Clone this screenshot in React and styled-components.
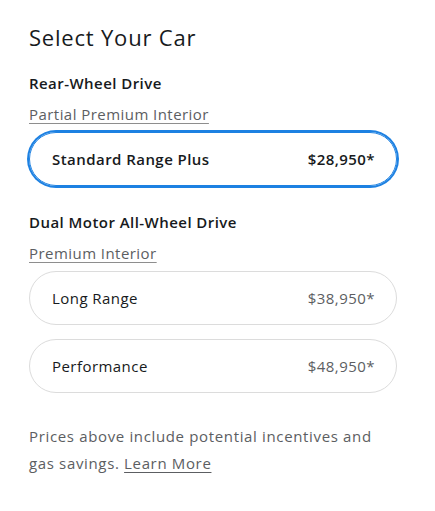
import React from 'react';
import styled, { createGlobalStyle } from 'styled-components';

const GlobalStyle = createGlobalStyle`
  body {
    margin: 0;
    background: #fff;
    font-family: "Open Sans", "Liberation Sans", sans-serif;
    color: #171a20;
    letter-spacing: 0.45px;
  }
`;

const groups = [
  {
    drive: 'Rear-Wheel Drive',
    interior: 'Partial Premium Interior',
    cars: [{ id: 'sr', name: 'Standard Range Plus', price: '$28,950*' }],
  },
  {
    drive: 'Dual Motor All-Wheel Drive',
    interior: 'Premium Interior',
    cars: [
      { id: 'lr', name: 'Long Range', price: '$38,950*' },
      { id: 'p', name: 'Performance', price: '$48,950*' },
    ],
  },
];

const App = () => {
  const selected = 'sr';
  return (
    <Page>
      <GlobalStyle />
      <Title>Select Your Car</Title>
      {groups.map((g) => (
        <Group key={g.drive}>
          <Drive>{g.drive}</Drive>
          <Interior>{g.interior}</Interior>
          <Options>
            {g.cars.map((c) => (
              <Option key={c.id} $active={c.id === selected}>
                <span>{c.name}</span>
                <Price $active={c.id === selected}>{c.price}</Price>
              </Option>
            ))}
          </Options>
        </Group>
      ))}
      <Note>
        Prices above include potential incentives and gas savings.{' '}
        <NoteLink>Learn More</NoteLink>
      </Note>
    </Page>
  );
};

const Page = styled.div`
  width: 368px;
  padding: 22px 0 0 29px;
`;

const Title = styled.h1`
  margin: 0;
  font-size: 22px;
  line-height: 30px;
  font-weight: 400;
  letter-spacing: 0.8px;
`;

const Group = styled.section`
  margin-top: 19px;
  & + & {
    margin-top: 24px;
  }
`;

const Drive = styled.h3`
  margin: 0;
  font-size: 15px;
  line-height: 24px;
  font-weight: 600;
`;

const Interior = styled.a`
  display: inline-block;
  margin-top: 7px;
  font-size: 15px;
  line-height: 24px;
  color: #5c5e62;
  text-decoration: underline;
  text-underline-offset: 3px;
  text-decoration-color: #8e8e8e;
`;

const Options = styled.div`
  display: flex;
  flex-direction: column;
  gap: 14px;
  margin-top: 6px;
`;

const Option = styled.div`
  display: flex;
  justify-content: space-between;
  align-items: center;
  height: 54px;
  box-sizing: border-box;
  padding: 0 21px 0 22px;
  border-radius: 27px;
  font-size: 15px;
  border: 1px solid ${(p) => (p.$active ? '#1d81e2' : '#dcdcdc')};
  box-shadow: ${(p) => (p.$active ? '0 0 0 2px #1d81e2' : 'none')};
  font-weight: ${(p) => (p.$active ? 600 : 400)};
  color: #171a20;
`;

const Price = styled.span`
  color: ${(p) => (p.$active ? '#171a20' : '#5c5e62')};
`;

const Note = styled.p`
  margin: 30px 0 0;
  width: 352px;
  font-size: 15px;
  line-height: 27px;
  letter-spacing: 0.65px;
  color: #5c5e62;
`;

const NoteLink = styled.a`
  color: #5c5e62;
  text-decoration: underline;
  text-underline-offset: 3px;
`;

export default App;
